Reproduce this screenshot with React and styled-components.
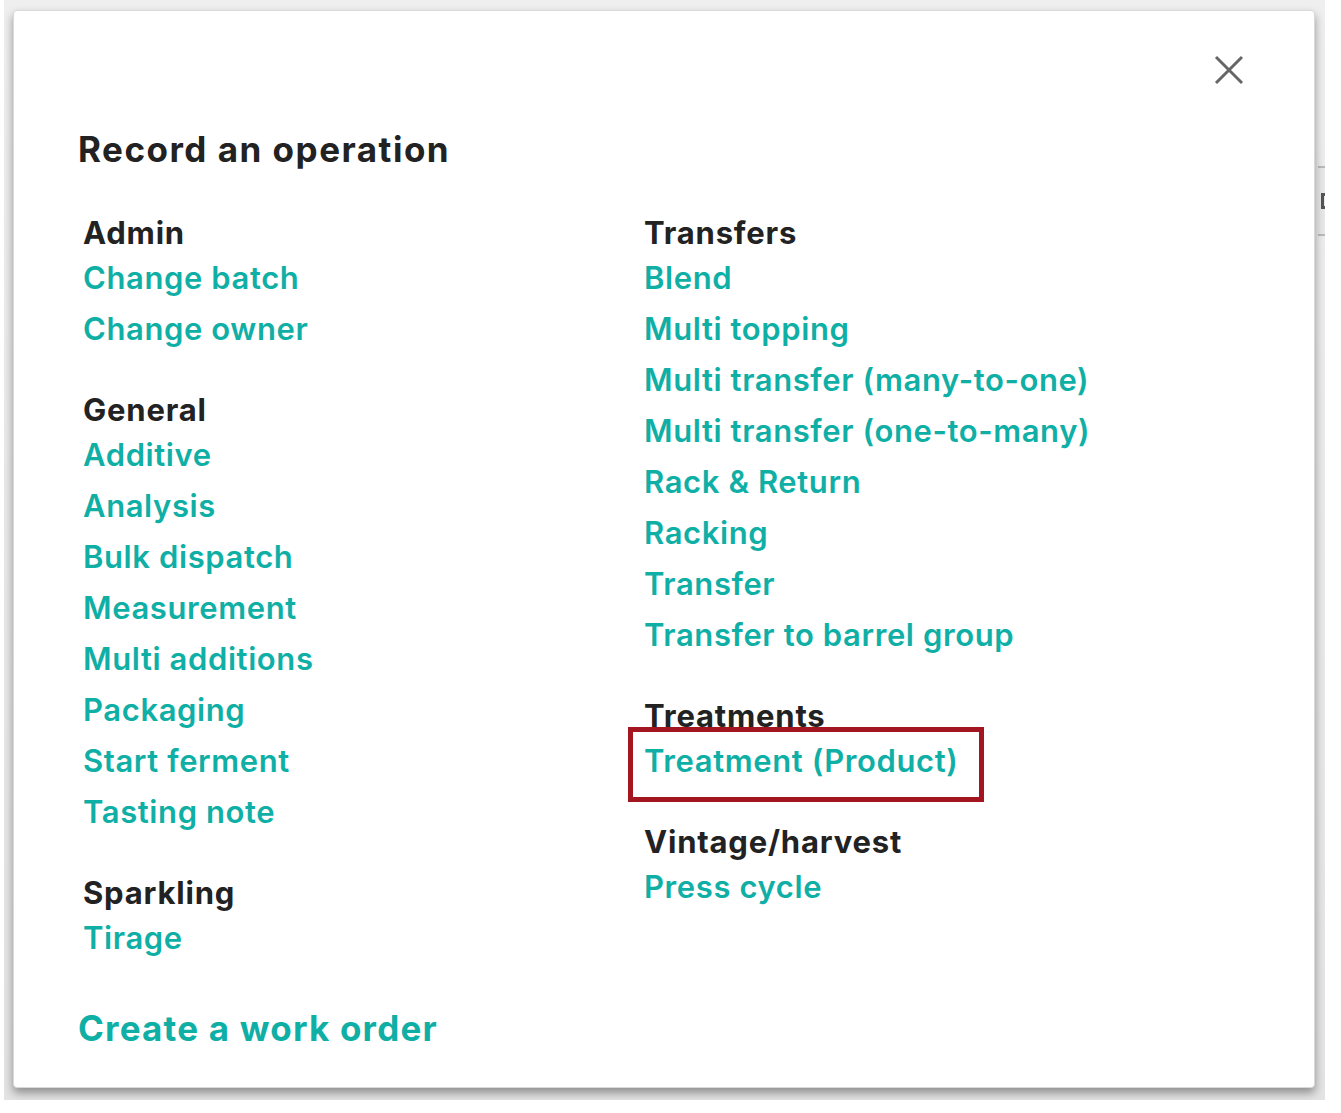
import styled, { createGlobalStyle } from "styled-components";

const GlobalStyle = createGlobalStyle`
  html, body {
    margin: 0;
    padding: 0;
    background: #fff;
  }
  body {
    font-family: "Inter", "DejaVu Sans", sans-serif;
  }
`;

const TEAL = "#10afa6";
const INK = "#222";

const sections = {
  left: [
    { title: "Admin", items: ["Change batch", "Change owner"] },
    {
      title: "General",
      items: [
        "Additive",
        "Analysis",
        "Bulk dispatch",
        "Measurement",
        "Multi additions",
        "Packaging",
        "Start ferment",
        "Tasting note",
      ],
    },
    { title: "Sparkling", items: ["Tirage"] },
  ],
  right: [
    {
      title: "Transfers",
      items: [
        "Blend",
        "Multi topping",
        "Multi transfer (many-to-one)",
        "Multi transfer (one-to-many)",
        "Rack & Return",
        "Racking",
        "Transfer",
        "Transfer to barrel group",
      ],
    },
    { title: "Treatments", items: ["Treatment (Product)"], marked: "Treatment (Product)" },
    { title: "Vintage/harvest", items: ["Press cycle"] },
  ],
};

const Stage = styled.div`
  width: 1321px;
  height: 1100px;
  margin-left: 4px;
  padding: 10px 10px 0 9px;
  box-sizing: border-box;
  background: linear-gradient(#efefef, #e4e4e4);
  position: relative;
`;

const Peek = styled.div`
  position: absolute;
  right: 0;
  top: 166px;
  width: 7px;
  height: 66px;
  border-top: 2px solid #bbb;
  border-bottom: 2px solid #bbb;
  background: #e8e8e8;
  display: flex;
  align-items: center;
  justify-content: flex-end;
  &::after {
    content: "";
    width: 4px;
    height: 16px;
    border: 3px solid #555;
    border-right: none;
    box-sizing: border-box;
  }
`;

const Modal = styled.div`
  position: relative;
  width: 1302px;
  height: 1078px;
  box-sizing: border-box;
  background: #fff;
  border: 1px solid #d9d9d9;
  border-radius: 4px;
  box-shadow: 0 5px 10px rgba(0, 0, 0, 0.38);
  padding: 118px 60px 0 64px;
`;

const CloseButton = styled.button`
  position: absolute;
  top: 33px;
  right: 59px;
  width: 52px;
  height: 52px;
  border: none;
  background: none;
  padding: 0;
  cursor: pointer;
  display: flex;
  align-items: center;
  justify-content: center;
`;

const Title = styled.h2`
  margin: 0 0 45px;
  font-size: 35px;
  line-height: 40px;
  font-weight: 700;
  color: ${INK};
  letter-spacing: 1.5px;
`;

const Columns = styled.div`
  display: grid;
  grid-template-columns: 561px 1fr;
  padding-left: 5px;
`;

const Column = styled.div`
  display: flex;
  flex-direction: column;
`;

const Group = styled.div`
  margin-bottom: 37px;
`;

const GroupTitle = styled.h3`
  margin: 0 0 1px;
  font-size: 31px;
  line-height: 37px;
  font-weight: 700;
  color: ${INK};
  letter-spacing: 0.8px;
`;

const List = styled.ul`
  list-style: none;
  margin: 0;
  padding: 0;
`;

const Item = styled.li`
  line-height: 51px;
  height: 51px;
`;

const OpLink = styled.a`
  position: relative;
  display: inline-block;
  font-size: 31px;
  font-weight: 600;
  color: ${TEAL};
  text-decoration: none;
  letter-spacing: 0.6px;
  cursor: pointer;

  ${(p) =>
    p.$marked &&
    `
    &::after {
      content: "";
      position: absolute;
      left: -16px;
      right: -26px;
      top: -8px;
      bottom: -16px;
      border: 5px solid #a3161f;
      pointer-events: none;
    }
  `}
`;

const WorkOrder = styled.a`
  display: inline-block;
  margin-top: 6px;
  font-size: 35px;
  line-height: 44px;
  font-weight: 700;
  color: ${TEAL};
  text-decoration: none;
  letter-spacing: 1.2px;
`;

const CloseIcon = () => (
  <svg width="30" height="30" viewBox="0 0 30 30">
    <path d="M2 2 L28 28 M28 2 L2 28" stroke="#666" strokeWidth="3" fill="none" />
  </svg>
);

const Section = ({ title, items, marked }) => (
  <Group>
    <GroupTitle>{title}</GroupTitle>
    <List>
      {items.map((item) => (
        <Item key={item}>
          <OpLink $marked={item === marked}>{item}</OpLink>
        </Item>
      ))}
    </List>
  </Group>
);

export default function App() {
  return (
    <>
      <GlobalStyle />
      <Stage>
        <Peek />
        <Modal>
          <CloseButton aria-label="Close">
            <CloseIcon />
          </CloseButton>
          <Title>Record an operation</Title>
          <Columns>
            <Column>
              {sections.left.map((s) => (
                <Section key={s.title} {...s} />
              ))}
            </Column>
            <Column>
              {sections.right.map((s) => (
                <Section key={s.title} {...s} />
              ))}
            </Column>
          </Columns>
          <WorkOrder>Create a work order</WorkOrder>
        </Modal>
      </Stage>
    </>
  );
}
